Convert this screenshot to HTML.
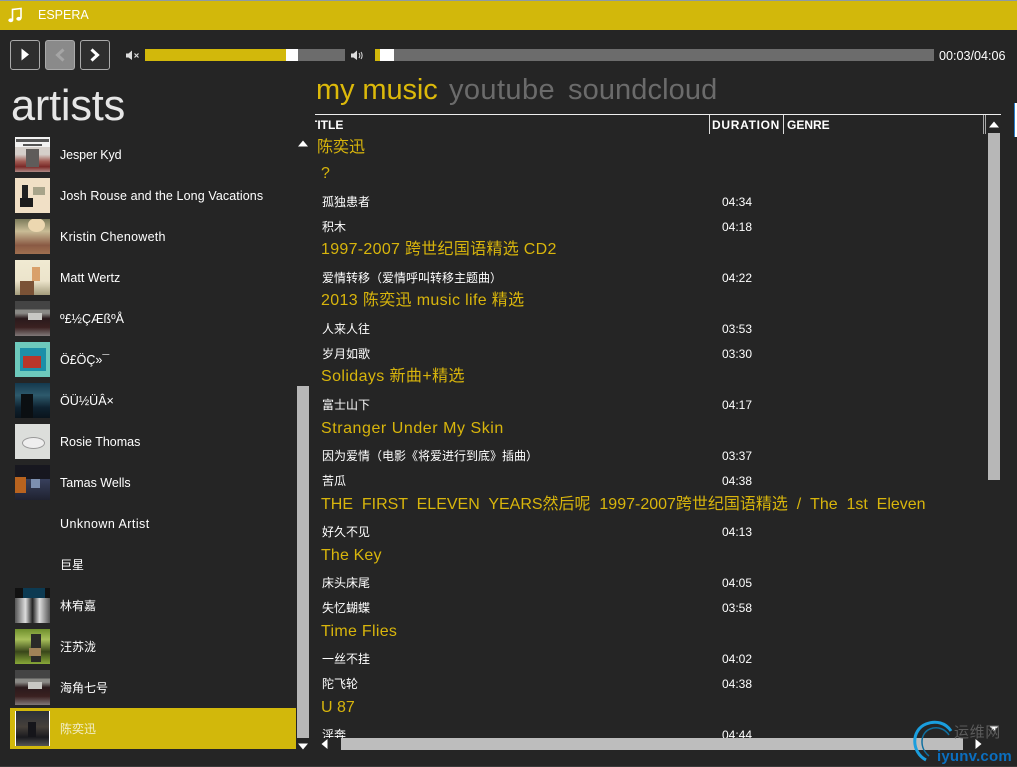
<!DOCTYPE html>
<html><head><meta charset="utf-8"><style>
html,body{margin:0;padding:0;background:#252525}
#p{position:relative;width:1017px;height:767px;overflow:hidden;background:#252525;font-family:"Liberation Sans","Noto Sans CJK SC",sans-serif;color:#fff}
#p div{position:absolute}
.t{white-space:nowrap}
.a{left:60px;font-size:12.5px;line-height:16px;white-space:nowrap;color:#fff}
.th{left:15px;width:35px;height:35px;overflow:hidden}
.g{font-size:16px;line-height:20px;color:#d8b50c;white-space:nowrap}
.s{left:322px;font-size:12px;line-height:16px;white-space:nowrap;color:#fff}
.d{left:722px;font-size:12px;line-height:16px;white-space:nowrap;color:#fff}
.btn{top:40px;width:28px;height:28px;border:1px solid #aaa;border-radius:3px;background:#2e2e2e}
.h{top:118px;font-size:12px;font-weight:bold;line-height:14px;white-space:nowrap;color:#fff}
</style></head><body><div id="p">
<div style="left:0;top:0;width:1017px;height:30px;background:#d2b80b"></div>
<div style="left:0;top:0;width:1017px;height:1px;background:#8c9aa5"></div>
<svg style="position:absolute;left:8px;top:7px" width="14" height="16" viewBox="0 0 14 16"><path d="M4.500 13V2.500L13 1.500V11.500" fill="none" stroke="#fff" stroke-width="1.600"/><ellipse cx="2.800" cy="13.300" rx="2.500" ry="1.900" fill="#fff"/><ellipse cx="10.800" cy="11.800" rx="2.500" ry="1.900" fill="#fff"/></svg>
<div class="t" style="left:38px;top:7px;font-size:12.5px;line-height:17px;color:#fff">ESPERA</div>

<div class="btn" style="left:10px"></div>
<svg style="position:absolute;left:21px;top:48px" width="9" height="13"><path d="M0.500 0.500L8 6.500L0.500 12.500Z" fill="#fff"/></svg>
<div class="btn" style="left:45px;background:#8a8a8a"></div>
<svg style="position:absolute;left:54px;top:48px" width="12" height="14"><path d="M9.500 1.500L3.500 7L9.500 12.500" fill="none" stroke="#a5a5a5" stroke-width="3"/></svg>
<div class="btn" style="left:80px"></div>
<svg style="position:absolute;left:89px;top:48px" width="12" height="14"><path d="M2.500 1.500L8.500 7L2.500 12.500" fill="none" stroke="#fff" stroke-width="3"/></svg>

<svg style="position:absolute;left:126px;top:50px" width="14" height="11"><path d="M0 3.500H2.500L6 0.500V10L2.500 7.500H0Z" fill="#ddd"/><path d="M8.500 3.500L12.500 7.500M12.500 3.500L8.500 7.500" stroke="#ddd" stroke-width="1.200"/></svg>
<div style="left:145px;top:49px;width:200px;height:12px;background:#6c6c6c"></div>
<div style="left:145px;top:49px;width:141px;height:12px;background:#d2b80b"></div>
<div style="left:286px;top:49px;width:12px;height:12px;background:#fff"></div>
<svg style="position:absolute;left:351px;top:50px" width="14" height="11"><path d="M0 3.500H2.500L6 0.500V10L2.500 7.500H0Z" fill="#ddd"/><path d="M8 3C9 4.500 9 6.500 8 8M10 2C11.500 4 11.500 7 10 9" fill="none" stroke="#ddd"/></svg>
<div style="left:375px;top:49px;width:559px;height:12px;background:#6c6c6c"></div>
<div style="left:375px;top:49px;width:5px;height:12px;background:#d2b80b"></div>
<div style="left:380px;top:49px;width:14px;height:12px;background:#fff"></div>
<div class="t" style="left:939px;top:48px;font-size:12.6px;line-height:16px">00:03/04:06</div>

<div class="t" style="left:11px;top:78px;font-size:43.3px;line-height:56px;color:#e6e6e6;letter-spacing:-.2px">artists</div>

<div class="t" style="left:316px;top:72px;font-size:29px;line-height:36px;color:#dcb90a;letter-spacing:-.1px">my music</div>
<div class="t" style="left:449px;top:72px;font-size:29px;line-height:36px;color:#6b6b6b;letter-spacing:.4px">youtube</div>
<div class="t" style="left:568px;top:72px;font-size:29px;line-height:36px;color:#6b6b6b;letter-spacing:.1px">soundcloud</div>

<div style="left:315px;top:114px;width:686px;height:1px;background:#eee"></div>
<div style="left:315px;top:118px;width:40px;height:14px;overflow:hidden"><div class="h" style="left:-5px;top:0">TITLE</div></div>
<div style="left:709px;top:115px;width:1px;height:19px;background:#ddd"></div>
<div class="h" style="left:712px;letter-spacing:.7px">DURATION</div>
<div style="left:783px;top:115px;width:1px;height:19px;background:#ddd"></div>
<div class="h" style="left:787px">GENRE</div>
<div style="left:983px;top:115px;width:1px;height:19px;background:#aaa"></div>
<div style="left:985px;top:115px;width:1px;height:19px;background:#aaa"></div>
<div style="left:1014px;top:103px;width:3px;height:34px;background:#fff;border-left:1px solid #2a7fd0;box-sizing:border-box"></div>

<!-- artist thumbnails -->
<div class="th" style="top:137px;background:linear-gradient(#f2f2f2 0 28%,#d5cfca 28% 50%,#a05a52 70%,#7a2a28 85%,#b08a85)"><div style="left:1px;top:2px;width:33px;height:3px;background:#555"></div><div style="left:8px;top:7px;width:19px;height:2px;background:#555"></div><div style="left:11px;top:12px;width:13px;height:18px;background:#5f5c5a"></div></div>
<div class="th" style="top:178px;background:#f1e0c6"><div style="left:7px;top:7px;width:6px;height:14px;background:#222"></div><div style="left:5px;top:20px;width:13px;height:9px;background:#1c1c1c"></div><div style="left:18px;top:9px;width:12px;height:8px;background:#a8a48a"></div></div>
<div class="th" style="top:219px;background:linear-gradient(#7b7a5a,#c9bc96 35%,#8a5a44 75%,#a07050)"><div style="left:13px;top:-1px;width:17px;height:14px;border-radius:50%;background:#ecd7b0"></div></div>
<div class="th" style="top:260px;background:linear-gradient(#f0ead2,#ece4cb 60%,#a49c7c)"><div style="left:5px;top:21px;width:14px;height:14px;background:#7a5236"></div><div style="left:17px;top:7px;width:8px;height:14px;background:#d9a06a"></div></div>
<div class="th" style="top:301px;background:linear-gradient(#444 0 25%,#8a8a86 25% 35%,#2a1a1c 50%,#3a2020 75%,#807878)"><div style="left:13px;top:12px;width:14px;height:7px;background:#c8c8c4"></div></div>
<div class="th" style="top:342px;background:#6dc9bc"><div style="left:5px;top:6px;width:26px;height:23px;background:#1c8fa8"></div><div style="left:8px;top:14px;width:18px;height:12px;background:#b8362a"></div></div>
<div class="th" style="top:383px;background:linear-gradient(#14394e,#2e5a6c 35%,#0e2230 70%,#0a141c)"><div style="left:6px;top:11px;width:12px;height:24px;background:#0b0f12"></div></div>
<div class="th" style="top:424px;background:#dcdedb"><div style="left:7px;top:13px;width:21px;height:10px;border:1px solid #999;border-radius:50%;background:#eee"></div></div>
<div class="th" style="top:465px;background:linear-gradient(#17171f 0 40%,#38405c 40%,#1f2230)"><div style="left:0;top:12px;width:11px;height:16px;background:#b8631f"></div><div style="left:16px;top:14px;width:9px;height:9px;background:#7c8fb0"></div></div>
<div class="th" style="top:588px;background:#111"><div style="left:0;top:10px;width:35px;height:25px;background:linear-gradient(90deg,#555,#ddd 30%,#222 50%,#ddd 70%,#555)"></div><div style="left:8px;top:0;width:22px;height:10px;background:#0c3a52"></div></div>
<div class="th" style="top:629px;background:linear-gradient(#6f8f2c,#a7bf5a 30%,#39461a 65%,#88a838)"><div style="left:16px;top:5px;width:10px;height:28px;background:#2a2a28"></div><div style="left:14px;top:19px;width:12px;height:8px;background:#a08258"></div></div>
<div class="th" style="top:670px;background:linear-gradient(#444 0 25%,#8a8a86 25% 35%,#2a1a1c 50%,#3a2020 75%,#807878)"><div style="left:13px;top:12px;width:14px;height:7px;background:#c8c8c4"></div></div>

<div style="left:10px;top:708px;width:286px;height:41px;background:#d2b80b"></div>
<div class="th" style="top:711px;background:#fff"><div style="left:1px;top:0;width:33px;height:35px;background:linear-gradient(#2c3038,#46403a 45%,#1a1a1e 75%,#555)"></div><div style="left:13px;top:11px;width:8px;height:15px;background:#15151a"></div></div>

<div class="a" style="top:147px;letter-spacing:-.1px">Jesper Kyd</div>
<div class="a" style="top:188px;letter-spacing:.1px">Josh Rouse and the Long Vacations</div>
<div class="a" style="top:229px;letter-spacing:.25px">Kristin Chenoweth</div>
<div class="a" style="top:270px">Matt Wertz</div>
<div class="a" style="top:311px">º£½ÇÆßºÅ</div>
<div class="a" style="top:352px">Ö£ÖÇ»¯</div>
<div class="a" style="top:393px">ÖÜ½ÜÂ×</div>
<div class="a" style="top:434px">Rosie Thomas</div>
<div class="a" style="top:475px">Tamas Wells</div>
<div class="a" style="top:516px;letter-spacing:.45px">Unknown Artist</div>
<div class="a" style="top:557px;font-size:12px">巨星</div>
<div class="a" style="top:598px;font-size:12px">林宥嘉</div>
<div class="a" style="top:639px;font-size:12px">汪苏泷</div>
<div class="a" style="top:680px;font-size:12px">海角七号</div>
<div class="a" style="top:721px;font-size:12px;color:#f2eecb">陈奕迅</div>

<!-- left scrollbar -->
<svg style="position:absolute;left:298px;top:140px" width="11" height="7"><path d="M5 0.500L10 6.500H0Z" fill="#fff"/></svg>
<div style="left:297px;top:386px;width:12px;height:352px;background:#b7b7b7"></div>
<svg style="position:absolute;left:298px;top:743px" width="11" height="7"><path d="M0 0.500H10L5 6.500Z" fill="#fff"/></svg>

<!-- right list -->
<div class="g" style="left:317px;top:138px">陈奕迅</div>
<div class="g" style="left:321px;top:164px">?</div>
<div class="s" style="top:194px">孤独患者</div><div class="d" style="top:194px">04:34</div>
<div class="s" style="top:219px">积木</div><div class="d" style="top:219px">04:18</div>
<div class="g" style="left:321px;top:240px;letter-spacing:.3px">1997-2007 跨世纪国语精选 CD2</div>
<div class="s" style="top:270px">爱情转移（爱情呼叫转移主题曲）</div><div class="d" style="top:270px">04:22</div>
<div class="g" style="left:321px;top:291px;letter-spacing:.36px">2013 陈奕迅 music life 精选</div>
<div class="s" style="top:321px">人来人往</div><div class="d" style="top:321px">03:53</div>
<div class="s" style="top:346px">岁月如歌</div><div class="d" style="top:346px">03:30</div>
<div class="g" style="left:321px;top:367px;letter-spacing:.4px">Solidays 新曲+精选</div>
<div class="s" style="top:397px">富士山下</div><div class="d" style="top:397px">04:17</div>
<div class="g" style="left:321px;top:419px;letter-spacing:.55px">Stranger Under My Skin</div>
<div class="s" style="top:448px">因为爱情（电影《将爱进行到底》插曲）</div><div class="d" style="top:448px">03:37</div>
<div class="s" style="top:473px">苦瓜</div><div class="d" style="top:473px">04:38</div>
<div class="g" style="left:321px;top:495px;word-spacing:4.400px">THE FIRST ELEVEN YEARS然后呢 1997-2007跨世纪国语精选 / The 1st Eleven</div>
<div class="s" style="top:524px">好久不见</div><div class="d" style="top:524px">04:13</div>
<div class="g" style="left:321px;top:546px;letter-spacing:.15px">The Key</div>
<div class="s" style="top:575px">床头床尾</div><div class="d" style="top:575px">04:05</div>
<div class="s" style="top:600px">失忆蝴蝶</div><div class="d" style="top:600px">03:58</div>
<div class="g" style="left:321px;top:622px;letter-spacing:.3px">Time Flies</div>
<div class="s" style="top:651px">一丝不挂</div><div class="d" style="top:651px">04:02</div>
<div class="s" style="top:676px">陀飞轮</div><div class="d" style="top:676px">04:38</div>
<div class="g" style="left:321px;top:698px">U 87</div>
<div style="left:315px;top:726px;width:660px;height:12px;overflow:hidden"><div class="s" style="left:7px;top:1px">淫奔</div><div class="d" style="left:407px;top:1px">04:44</div></div>

<!-- right scrollbar -->
<svg style="position:absolute;left:989px;top:121px" width="11" height="7"><path d="M5 0.500L10 6.500H0Z" fill="#fff"/></svg>
<div style="left:988px;top:133px;width:12px;height:347px;background:#b7b7b7"></div>
<svg style="position:absolute;left:989px;top:725px" width="11" height="7"><path d="M0 0.500H10L5 6.500Z" fill="#fff"/></svg>
<!-- bottom scrollbar -->
<svg style="position:absolute;left:321px;top:739px" width="7" height="11"><path d="M6.500 0L0.500 5L6.500 10Z" fill="#fff"/></svg>
<div style="left:341px;top:738px;width:622px;height:12px;background:#bdbdbd"></div>
<svg style="position:absolute;left:975px;top:739px" width="7" height="11"><path d="M0.500 0L6.500 5L0.500 10Z" fill="#fff"/></svg>
<div style="left:0;top:766px;width:1017px;height:1px;background:#3a3a3a"></div>

<!-- watermark -->
<svg style="position:absolute;left:912px;top:720px" width="48" height="44" viewBox="0 0 48 44"><path d="M14 40C-1 32 -1 10 14 4C24 0 34 3 39 11" fill="none" stroke="#1a9ede" stroke-width="3"/><path d="M17 36C7 28 8 13 18 9C26 6 33 9 37 15" fill="none" stroke="#0f6f9f" stroke-width="1.500"/></svg>
<div class="t" style="left:954px;top:724px;font-size:15px;line-height:18px;color:#5b5b5b;letter-spacing:.6px">运维网</div>
<div class="t" style="left:937px;top:748px;font-size:15px;line-height:17px;font-weight:bold;color:#0b6fc0;letter-spacing:.2px">iyunv.com</div>
</div></body></html>
